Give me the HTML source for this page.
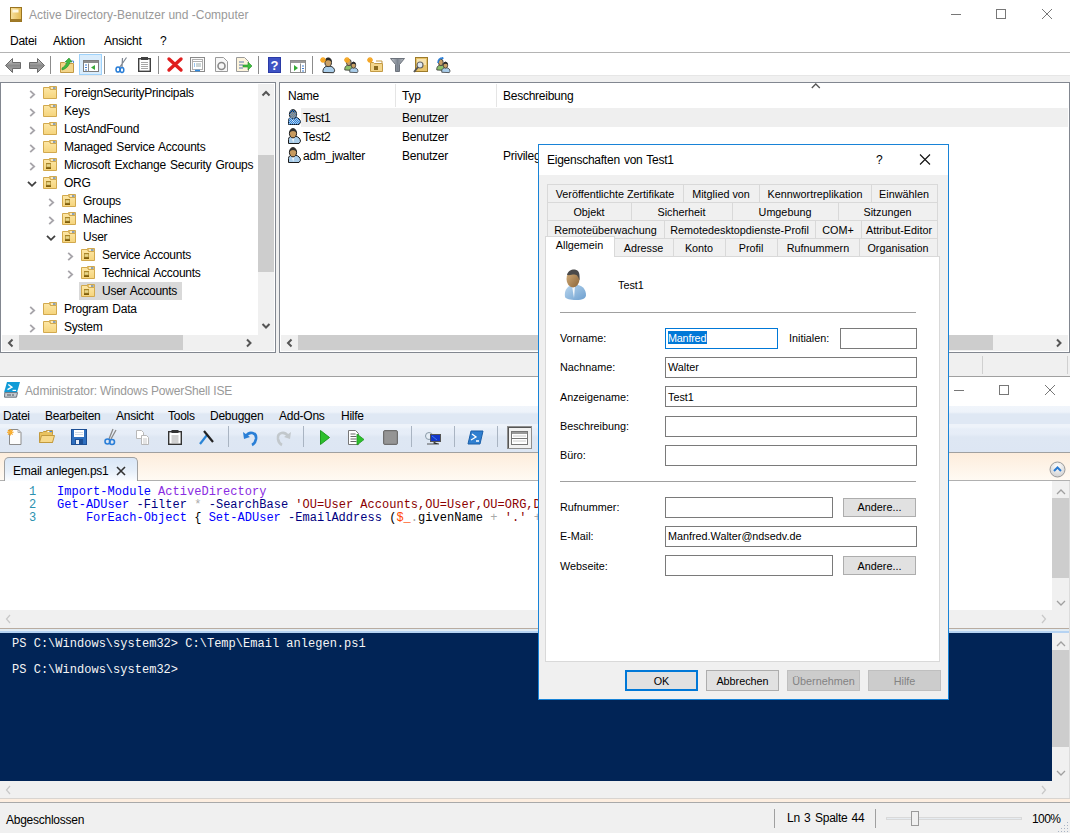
<!DOCTYPE html>
<html><head><meta charset="utf-8">
<style>
*{box-sizing:border-box}
html,body{margin:0;padding:0}
body{width:1070px;height:833px;position:relative;overflow:hidden;background:#fff;font-family:"Liberation Sans",sans-serif;font-size:12px;color:#000}
.a{position:absolute}
.t{position:absolute;white-space:nowrap;line-height:16px;font-size:12px;letter-spacing:-0.25px;word-spacing:1px}
.ti{letter-spacing:0;word-spacing:0}
.d{position:absolute;white-space:nowrap;line-height:14px;font-size:10.8px}
.m{position:absolute;white-space:pre;line-height:13px;font-family:"Liberation Mono",monospace;font-size:12px;letter-spacing:0.018px}
svg{position:absolute;overflow:visible}
</style></head><body>

<svg width="0" height="0" style="position:absolute;left:0;top:0">
<defs>
<linearGradient id="fold" x1="0" y1="0" x2="0" y2="1"><stop offset="0" stop-color="#fde7a6"/><stop offset="1" stop-color="#f5d47c"/></linearGradient>
<symbol id="folder" viewBox="0 0 14 13">
<path d="M0.5 1.5H6.5L7.5 3.5H13.5V12.5H0.5Z" fill="url(#fold)" stroke="#d2a94e" stroke-width="1"/>
<path d="M6.5 0.5H13.5V3.5H7.5Z" fill="#f3d07a" stroke="#d2a94e" stroke-width="1"/>
<path d="M8 2h2" stroke="#fff" stroke-width="1.2"/><path d="M10 2h2.5" stroke="#4a86e0" stroke-width="1.2"/>
</symbol>
<symbol id="ou" viewBox="0 0 14 13">
<path d="M0.5 1.5H6.5L7.5 3.5H13.5V12.5H0.5Z" fill="url(#fold)" stroke="#d2a94e" stroke-width="1"/>
<path d="M6.5 0.5H13.5V3.5H7.5Z" fill="#f3d07a" stroke="#d2a94e" stroke-width="1"/>
<path d="M8 2h2" stroke="#fff" stroke-width="1.2"/><path d="M10 2h2.5" stroke="#4a86e0" stroke-width="1.2"/>
<rect x="3" y="5" width="5" height="6" fill="#a88428"/><rect x="3.6" y="6.2" width="3.8" height="2.6" fill="#e8d68a"/><rect x="3" y="9.5" width="5" height="1.5" fill="#7d5c0c"/>
</symbol>
<symbol id="user" viewBox="0 0 13 16">
<path d="M0.5 15.5V11.5C0.5 9.3 2 8.3 4 8.3H7.5C10.3 8.5 12.5 10.8 12.5 13.3L11 15.5z" fill="#a9cdea" stroke="#1b1b1b" stroke-width="1"/>
<path d="M3.6 9l1.6 6l1.4-6z" fill="#f2f7fb"/>
<ellipse cx="5" cy="5.3" rx="3.6" ry="4.6" fill="#c79a5e" stroke="#1b1b1b" stroke-width="1"/>
<path d="M1.5 5C1.5 2 3 0.6 5 0.6S8.6 2 8.6 5C7.8 3.8 6.5 3 5 3S2.3 3.8 1.5 5z" fill="#303030"/>
</symbol>
<symbol id="userd" viewBox="0 0 13 16">
<path d="M0.5 15.5V11.5C0.5 9.3 2 8.3 4 8.3H7.5C10.3 8.5 12.5 10.8 12.5 13.3L11 15.5z" fill="url(#dith)"/>
<ellipse cx="5" cy="5.3" rx="3.6" ry="4.6" fill="url(#dith)"/>
</symbol>
<pattern id="dith" width="2" height="2" patternUnits="userSpaceOnUse"><rect width="1" height="1" fill="#2f7fd8"/><rect x="1" y="1" width="1" height="1" fill="#2f7fd8"/></pattern>
</defs></svg>

<div class="a" style="left:0px;top:0px;width:1070px;height:52px;background:#fff"></div>
<div class="t" style="left:29px;top:7px;color:#999;letter-spacing:0;word-spacing:0">Active Directory-Benutzer und -Computer</div>
<div class="t" style="left:10px;top:33px">Datei</div>
<div class="t" style="left:53px;top:33px">Aktion</div>
<div class="t" style="left:104px;top:33px">Ansicht</div>
<div class="t" style="left:160px;top:33px">?</div>
<div class="a" style="left:0px;top:52px;width:1070px;height:1px;background:#b4b4b4"></div>
<div class="a" style="left:0px;top:75px;width:1070px;height:1px;background:#e6e6e6"></div>
<div class="a" style="left:0px;top:76px;width:1070px;height:6px;background:#f0f0f0"></div>
<div class="a" style="left:0px;top:82px;width:276px;height:271px;border:1px solid #828790;background:#fff"></div>
<div class="a" style="left:276px;top:82px;width:3px;height:271px;background:#f0f0f0"></div>
<div class="a" style="left:279px;top:82px;width:791px;height:271px;border:1px solid #828790;background:#fff"></div>
<div class="a" style="left:0px;top:353px;width:1070px;height:23px;background:#f0f0f0"></div>
<div class="a" style="left:0px;top:376px;width:1070px;height:1px;background:#a0a0a0"></div>
<div class="a" style="left:1px;top:83px;width:256px;height:252px;overflow:hidden">
<svg style="left:28px;top:7px" width="7" height="9"><path d="M1.2 0.8l4 3.7l-4 3.7" fill="none" stroke="#a7a5aa" stroke-width="1.8"/></svg>
<svg style="left:42px;top:3px" width="14" height="13"><use href="#folder"/></svg>
<div class="t" style="left:63px;top:2px">ForeignSecurityPrincipals</div>
<svg style="left:28px;top:25px" width="7" height="9"><path d="M1.2 0.8l4 3.7l-4 3.7" fill="none" stroke="#a7a5aa" stroke-width="1.8"/></svg>
<svg style="left:42px;top:21px" width="14" height="13"><use href="#folder"/></svg>
<div class="t" style="left:63px;top:20px">Keys</div>
<svg style="left:28px;top:43px" width="7" height="9"><path d="M1.2 0.8l4 3.7l-4 3.7" fill="none" stroke="#a7a5aa" stroke-width="1.8"/></svg>
<svg style="left:42px;top:39px" width="14" height="13"><use href="#folder"/></svg>
<div class="t" style="left:63px;top:38px">LostAndFound</div>
<svg style="left:28px;top:61px" width="7" height="9"><path d="M1.2 0.8l4 3.7l-4 3.7" fill="none" stroke="#a7a5aa" stroke-width="1.8"/></svg>
<svg style="left:42px;top:57px" width="14" height="13"><use href="#folder"/></svg>
<div class="t" style="left:63px;top:56px">Managed Service Accounts</div>
<svg style="left:28px;top:79px" width="7" height="9"><path d="M1.2 0.8l4 3.7l-4 3.7" fill="none" stroke="#a7a5aa" stroke-width="1.8"/></svg>
<svg style="left:42px;top:75px" width="14" height="13"><use href="#ou"/></svg>
<div class="t" style="left:63px;top:74px">Microsoft Exchange Security Groups</div>
<svg style="left:26px;top:98px" width="10" height="6"><path d="M1 0.8l4 4l4-4" fill="none" stroke="#404040" stroke-width="1.8"/></svg>
<svg style="left:42px;top:93px" width="14" height="13"><use href="#ou"/></svg>
<div class="t" style="left:63px;top:92px">ORG</div>
<svg style="left:47px;top:115px" width="7" height="9"><path d="M1.2 0.8l4 3.7l-4 3.7" fill="none" stroke="#a7a5aa" stroke-width="1.8"/></svg>
<svg style="left:61px;top:111px" width="14" height="13"><use href="#ou"/></svg>
<div class="t" style="left:82px;top:110px">Groups</div>
<svg style="left:47px;top:133px" width="7" height="9"><path d="M1.2 0.8l4 3.7l-4 3.7" fill="none" stroke="#a7a5aa" stroke-width="1.8"/></svg>
<svg style="left:61px;top:129px" width="14" height="13"><use href="#ou"/></svg>
<div class="t" style="left:82px;top:128px">Machines</div>
<svg style="left:45px;top:152px" width="10" height="6"><path d="M1 0.8l4 4l4-4" fill="none" stroke="#404040" stroke-width="1.8"/></svg>
<svg style="left:61px;top:147px" width="14" height="13"><use href="#ou"/></svg>
<div class="t" style="left:82px;top:146px">User</div>
<svg style="left:66px;top:169px" width="7" height="9"><path d="M1.2 0.8l4 3.7l-4 3.7" fill="none" stroke="#a7a5aa" stroke-width="1.8"/></svg>
<svg style="left:80px;top:165px" width="14" height="13"><use href="#ou"/></svg>
<div class="t" style="left:101px;top:164px">Service Accounts</div>
<svg style="left:66px;top:187px" width="7" height="9"><path d="M1.2 0.8l4 3.7l-4 3.7" fill="none" stroke="#a7a5aa" stroke-width="1.8"/></svg>
<svg style="left:80px;top:183px" width="14" height="13"><use href="#ou"/></svg>
<div class="t" style="left:101px;top:182px">Technical Accounts</div>
<div class="a" style="left:78px;top:199px;width:0;height:0"></div>
<div class="a" style="left:78px;top:199px;width:103px;height:18px;background:#d9d9d9"></div>
<svg style="left:80px;top:201px" width="14" height="13"><use href="#ou"/></svg>
<div class="t" style="left:101px;top:200px">User Accounts</div>
<svg style="left:28px;top:223px" width="7" height="9"><path d="M1.2 0.8l4 3.7l-4 3.7" fill="none" stroke="#a7a5aa" stroke-width="1.8"/></svg>
<svg style="left:42px;top:219px" width="14" height="13"><use href="#folder"/></svg>
<div class="t" style="left:63px;top:218px">Program Data</div>
<svg style="left:28px;top:241px" width="7" height="9"><path d="M1.2 0.8l4 3.7l-4 3.7" fill="none" stroke="#a7a5aa" stroke-width="1.8"/></svg>
<svg style="left:42px;top:237px" width="14" height="13"><use href="#folder"/></svg>
<div class="t" style="left:63px;top:236px">System</div>
</div>
<div class="a" style="left:258px;top:84px;width:16px;height:251px;background:#f0f0f0"></div>
<div class="a" style="left:258px;top:155px;width:16px;height:117px;background:#cdcdcd"></div>
<svg style="left:258px;top:84px" width="16" height="251"><path d="M4.5 11.5l3.5-3.5l3.5 3.5" fill="none" stroke="#555" stroke-width="2"/><path d="M4.5 240l3.5 3.5l3.5-3.5" fill="none" stroke="#555" stroke-width="2"/></svg>
<div class="a" style="left:2px;top:335px;width:256px;height:16px;background:#f0f0f0"></div>
<div class="a" style="left:19px;top:335px;width:164px;height:15px;background:#cdcdcd"></div>
<svg style="left:2px;top:335px" width="256" height="16"><path d="M10.5 4.5l-3.5 3.5l3.5 3.5" fill="none" stroke="#555" stroke-width="2"/><path d="M245 4.5l3.5 3.5l-3.5 3.5" fill="none" stroke="#555" stroke-width="2"/></svg>
<div class="a" style="left:258px;top:335px;width:16px;height:16px;background:#f0f0f0"></div>
<div class="t" style="left:288px;top:88px">Name</div>
<div class="t" style="left:402px;top:88px">Typ</div>
<div class="t" style="left:503px;top:88px">Beschreibung</div>
<div class="a" style="left:395px;top:84px;width:1px;height:23px;background:#e5e5e5"></div>
<div class="a" style="left:496px;top:84px;width:1px;height:23px;background:#e5e5e5"></div>
<svg style="left:811px;top:83px" width="10" height="7"><path d="M0.8 5l4-4l4 4" fill="none" stroke="#555" stroke-width="1.3"/></svg>
<div class="a" style="left:301px;top:108px;width:767px;height:19px;background:#efefef"></div>
<svg style="left:288px;top:109px" width="13" height="16"><use href="#user"/><use href="#userd"/></svg>
<div class="t" style="left:303px;top:110px">Test1</div>
<div class="t" style="left:402px;top:110px">Benutzer</div>
<svg style="left:288px;top:128px" width="13" height="16"><use href="#user"/></svg>
<div class="t" style="left:303px;top:129px">Test2</div>
<div class="t" style="left:402px;top:129px">Benutzer</div>
<svg style="left:288px;top:147px" width="13" height="16"><use href="#user"/></svg>
<div class="t" style="left:303px;top:148px">adm_jwalter</div>
<div class="t" style="left:402px;top:148px">Benutzer</div>
<div class="t" style="left:503px;top:148px">Privileg</div>
<div class="a" style="left:281px;top:335px;width:787px;height:16px;background:#f0f0f0"></div>
<div class="a" style="left:298px;top:335px;width:695px;height:15px;background:#cdcdcd"></div>
<svg style="left:281px;top:335px" width="787" height="16"><path d="M10.5 4.5l-3.5 3.5l3.5 3.5" fill="none" stroke="#555" stroke-width="2"/><path d="M776 4.5l3.5 3.5l-3.5 3.5" fill="none" stroke="#555" stroke-width="2"/></svg>
<div class="a" style="left:982px;top:356px;width:1px;height:18px;background:#d0d0d0"></div>
<div class="a" style="left:1067px;top:356px;width:1px;height:18px;background:#d0d0d0"></div>
<svg style="left:940px;top:0" width="130" height="30"><path d="M11 14.5h10" stroke="#777" stroke-width="1"/><rect x="56.5" y="9.5" width="9" height="9" fill="none" stroke="#777" stroke-width="1"/><path d="M102 9l10 10M112 9l-10 10" stroke="#777" stroke-width="1"/></svg>
<div class="a" style="left:50px;top:56px;width:1px;height:18px;background:#8c8c8c"></div>
<div class="a" style="left:104px;top:56px;width:1px;height:18px;background:#8c8c8c"></div>
<div class="a" style="left:158px;top:56px;width:1px;height:18px;background:#8c8c8c"></div>
<div class="a" style="left:258px;top:56px;width:1px;height:18px;background:#8c8c8c"></div>
<div class="a" style="left:312px;top:56px;width:1px;height:18px;background:#8c8c8c"></div>
<svg style="left:5px;top:58px" width="17" height="15"><defs><linearGradient id="ag" x1="0" y1="0" x2="0" y2="1"><stop offset="0" stop-color="#d8d8d8"/><stop offset="0.5" stop-color="#8a8a8a"/><stop offset="1" stop-color="#b0b0b0"/></linearGradient></defs><path d="M0.5 7.5l7-7v4h8v6h-8v4z" fill="url(#ag)" stroke="#6b6b6b" stroke-width="1"/></svg>
<svg style="left:28px;top:58px" width="17" height="15"><path d="M16.5 7.5l-7-7v4h-8v6h8v4z" fill="url(#ag)" stroke="#6b6b6b" stroke-width="1"/></svg>
<svg style="left:60px;top:58px" width="15" height="15"><path d="M0.5 4.5h4l1 1h8v9h-13z" fill="#f3d58a" stroke="#c39a44"/><path d="M9 3h4.5v2" fill="none" stroke="#5a8fd8"/><path d="M2 10c2-1 4-3 5-6l-2 0l4-4l3 4h-2c-1 4-4 7-8 8z" fill="#3fb83f" stroke="#2a8a2a" stroke-width="0.6"/></svg>
<div class="a" style="left:79px;top:54px;width:23px;height:21px;background:#d9ecfc;border:1px solid #9ed2fb"></div>
<svg style="left:83px;top:60px" width="16" height="12"><rect x="0.5" y="0.5" width="15" height="11" fill="#fff" stroke="#7d7d7d"/><rect x="1" y="1" width="14" height="2" fill="#8d8d8d"/><path d="M5.5 3.5v8" stroke="#8d8d8d"/><path d="M2 5h2M2 7.5h2M2 10h2" stroke="#3d7ed6" stroke-width="1"/><path d="M12 5v5l-4-2.5z" fill="#3aa83a"/></svg>
<svg style="left:115px;top:57px" width="13" height="16"><path d="M11.5 0.5l-7 10M7.5 1l-0.5 9" stroke="#7d8590" stroke-width="1.2"/><ellipse cx="3" cy="12.5" rx="2" ry="2.6" fill="none" stroke="#2b7fd8" stroke-width="1.5"/><ellipse cx="7" cy="13" rx="1.8" ry="2.4" fill="none" stroke="#2b7fd8" stroke-width="1.5"/></svg>
<svg style="left:138px;top:57px" width="13" height="15"><rect x="0.7" y="1.7" width="11.6" height="12.6" fill="#fff" stroke="#404040" stroke-width="1.4"/><rect x="3" y="0" width="7" height="3" fill="#404040"/><path d="M3 5.5h7M3 7.5h7M3 9.5h7M3 11.5h7" stroke="#909090" stroke-width="0.8"/></svg>
<svg style="left:167px;top:57px" width="16" height="15"><path d="M2 2l12 11M14 2l-12 11" stroke="#e01f1f" stroke-width="3.4" stroke-linecap="round"/></svg>
<svg style="left:190px;top:57px" width="15" height="15"><rect x="0.5" y="0.5" width="14" height="14" fill="#fafafa" stroke="#8a8a8a"/><rect x="2.5" y="2.5" width="10" height="10" fill="#fff" stroke="#b0b0b0"/><path d="M2.5 4.5h10" stroke="#b0b0b0"/><path d="M4 7h1M4 9h1" stroke="#2f8ae0"/><path d="M6 7h5M6 9h5" stroke="#9aa"/><path d="M5 13.5h5" stroke="#2f8ae0" stroke-width="1.6"/></svg>
<svg style="left:215px;top:57px" width="13" height="15"><path d="M0.5 0.5h8l4 4v10h-12z" fill="#f7f7f7" stroke="#9a9a9a"/><circle cx="6.5" cy="9" r="3.5" fill="none" stroke="#8a8a8a" stroke-width="1.6"/></svg>
<svg style="left:236px;top:57px" width="16" height="15"><path d="M0.5 0.5h8l4 4v10h-12z" fill="#fdf4dc" stroke="#9a9a9a"/><path d="M3 5h5M3 8h4M3 11h4" stroke="#5a7bb0"/><path d="M7 8h5v-3l4 4l-4 4v-3h-5z" fill="#3cbf3c" stroke="#2a8a2a" stroke-width="0.6"/></svg>
<svg style="left:268px;top:57px" width="13" height="16"><rect x="0" y="0" width="13" height="16" fill="#2a3aa6"/><rect x="1" y="1" width="11" height="14" fill="#3d52c4"/><text x="6.5" y="13" font-family="Liberation Sans" font-weight="bold" font-size="13" fill="#fff" text-anchor="middle">?</text></svg>
<svg style="left:290px;top:60px" width="16" height="13"><rect x="0.5" y="0.5" width="15" height="12" fill="#fff" stroke="#8d8d8d"/><rect x="1" y="1" width="14" height="2" fill="#9a9a9a"/><path d="M10.5 3.5v9" stroke="#8d8d8d"/><path d="M12 6h2M12 8.5h2M12 11h2" stroke="#3d7ed6"/><path d="M4 5v6l4-3z" fill="#33aa33"/></svg>
<svg style="left:320px;top:57px" width="16" height="16"><g transform="translate(2,0)"><path d="M1 15.5c-0.5-3 1-5.8 3.8-6.3h3.2c3 0.4 4.6 2.4 4.6 4.6l-1 1.9z" fill="#a9cdea" stroke="#333" stroke-width="1"/><ellipse cx="6.2" cy="5.3" rx="3.3" ry="4.3" fill="#c9a066" stroke="#333"/><path d="M2.9 5c0-3 1.5-4.3 3.3-4.3s3.3 1.3 3.3 4.3c-1-1.2-2-1.7-3.3-1.7s-2.3 0.5-3.3 1.7z" fill="#2a2a2a"/></g><path d="M3 0v6M0 3h6M1 1l4 4M5 1l-4 4" stroke="#f5a623" stroke-width="1.3"/></svg>
<svg style="left:344px;top:57px" width="16" height="16"><g transform="translate(0,1) scale(0.8)"><path d="M1 15c-0.5-3 1-5.5 3.5-6h3c3 0.4 4.5 2.4 4.5 4.6l-1 1.9z" fill="#8cc06a" stroke="#333" stroke-width="1"/><ellipse cx="6" cy="5.5" rx="3" ry="4" fill="#c9a066" stroke="#333"/></g><g transform="translate(5,4) scale(0.75)"><path d="M1 15c-0.5-3 1-5.5 3.5-6h3c3 0.4 4.5 2.4 4.5 4.6l-1 1.9z" fill="#a9cdea" stroke="#333" stroke-width="1"/><ellipse cx="6" cy="5.5" rx="3" ry="4" fill="#c9a066" stroke="#333"/><path d="M3 5c0-3 1.5-4 3-4s3 1 3 4c-1-1-2-1.5-3-1.5s-2 0.5-3 1.5z" fill="#2a2a2a"/></g><path d="M3 0v6M0 3h6M1 1l4 4M5 1l-4 4" stroke="#f5a623" stroke-width="1.3"/></svg>
<svg style="left:367px;top:57px" width="16" height="15"><path d="M3.5 5.5h3l1 1h8v8h-12z" fill="#f3d58a" stroke="#c39a44"/><path d="M9 4h6v2" fill="none" stroke="#c39a44"/><rect x="7" y="9" width="4" height="4" fill="#8a6a1e"/><path d="M3 0v6M0 3h6M1 1l4 4M5 1l-4 4" stroke="#f5a623" stroke-width="1.3"/></svg>
<svg style="left:390px;top:57px" width="15" height="15"><defs><linearGradient id="fg" x1="0" x2="1"><stop offset="0" stop-color="#c8ccd2"/><stop offset="0.5" stop-color="#7d8590"/><stop offset="1" stop-color="#b8bcc2"/></linearGradient></defs><path d="M0.5 1.5h14l-5 6v7h-4v-7z" fill="url(#fg)" stroke="#6d737c"/></svg>
<svg style="left:413px;top:57px" width="15" height="16"><rect x="2.5" y="0.5" width="12" height="14" fill="#e8c36a" stroke="#9d7b2a"/><rect x="4" y="2" width="9" height="6" fill="#f6e3b0"/><circle cx="7" cy="8" r="3" fill="#dfe9f3" stroke="#666" stroke-width="1.2"/><path d="M5 10l-4 5" stroke="#555" stroke-width="2"/></svg>
<svg style="left:436px;top:57px" width="16" height="16"><g transform="translate(0,1) scale(0.8)"><path d="M1 15c-0.5-3 1-5.5 3.5-6h3c3 0.4 4.5 2.4 4.5 4.6l-1 1.9z" fill="#8cc06a" stroke="#333" stroke-width="1"/><ellipse cx="6" cy="5.5" rx="3" ry="4" fill="#c9a066" stroke="#333"/></g><g transform="translate(5,4) scale(0.75)"><path d="M1 15c-0.5-3 1-5.5 3.5-6h3c3 0.4 4.5 2.4 4.5 4.6l-1 1.9z" fill="#a9cdea" stroke="#333" stroke-width="1"/><ellipse cx="6" cy="5.5" rx="3" ry="4" fill="#c9a066" stroke="#333"/><path d="M3 5c0-3 1.5-4 3-4s3 1 3 4c-1-1-2-1.5-3-1.5s-2 0.5-3 1.5z" fill="#2a2a2a"/></g><path d="M2 6c0-3 2-5 5-5" fill="none" stroke="#2b7fd8" stroke-width="1.5"/><path d="M6 0l2 1l-2 2" fill="#2b7fd8"/></svg>
<div class="a" style="left:0px;top:377px;width:1070px;height:29px;background:#fff"></div>
<div class="t" style="left:25px;top:383px;color:#999;letter-spacing:-0.15px;word-spacing:0">Administrator: Windows PowerShell ISE</div>
<svg style="left:940px;top:377px" width="130" height="29"><path d="M14 13.5h10" stroke="#777" stroke-width="1"/><rect x="59.5" y="8.5" width="9" height="9" fill="none" stroke="#777" stroke-width="1"/><path d="M105 8l10 10M115 8l-10 10" stroke="#777" stroke-width="1"/></svg>
<div class="a" style="left:0px;top:406px;width:1070px;height:18px;background:linear-gradient(#f1f5fb 0,#eef3fa 6px,#dfe8f4 8px,#dfe8f4 18px)"></div>
<div class="a" style="left:0px;top:424px;width:1070px;height:28px;background:linear-gradient(#eef3fa 0,#eef3fa 3px,#e7eef8 5px,#e6edf7 10px,#dee7f3 13px,#dde6f3 28px)"></div>
<div class="t" style="left:3px;top:408px">Datei</div>
<div class="t" style="left:45px;top:408px">Bearbeiten</div>
<div class="t" style="left:116px;top:408px">Ansicht</div>
<div class="t" style="left:168px;top:408px">Tools</div>
<div class="t" style="left:210px;top:408px">Debuggen</div>
<div class="t" style="left:279px;top:408px">Add-Ons</div>
<div class="t" style="left:341px;top:408px">Hilfe</div>
<div class="a" style="left:228px;top:426px;width:1px;height:21px;background:#a9b4c2"></div>
<div class="a" style="left:303px;top:426px;width:1px;height:21px;background:#a9b4c2"></div>
<div class="a" style="left:411px;top:426px;width:1px;height:21px;background:#a9b4c2"></div>
<div class="a" style="left:454px;top:426px;width:1px;height:21px;background:#a9b4c2"></div>
<div class="a" style="left:497px;top:426px;width:1px;height:21px;background:#a9b4c2"></div>
<svg style="left:7px;top:429px" width="16" height="16"><path d="M2.5 0.5h8.5l3 3v12h-11.5z" fill="#fdfdfd" stroke="#8c8c8c"/><path d="M11 0.5v3h3" fill="none" stroke="#b0b0b0"/><g stroke="#f7a21b" stroke-width="1.1"><path d="M3.3 0v6.6M0 3.3h6.6M1 1l4.6 4.6M5.6 1l-4.6 4.6"/></g><circle cx="3.3" cy="3.3" r="1.6" fill="#f9b233"/></svg>
<svg style="left:39px;top:430px" width="16" height="14"><path d="M0.5 12.5V2.5H3.5L4.5 1.5H7.5V0.5H13.5V4.5H13.5V12.5z" fill="#e9c25e" stroke="#c29a3e"/><path d="M8.5 1.5h2" stroke="#fff" stroke-width="1.2"/><path d="M10.5 1.5h2.5" stroke="#4a86e0" stroke-width="1.2"/><path d="M0.5 12.5L2.5 5.5H15.5L13.5 12.5z" fill="#f7d98b" stroke="#c29a3e"/></svg>
<svg style="left:71px;top:429px" width="16" height="16"><rect x="0.5" y="0.5" width="15" height="15" fill="#2e6fbf" stroke="#1d4f94"/><rect x="3" y="1" width="10" height="7" fill="#fff"/><path d="M4 3.5h8M4 5.5h8" stroke="#c6d2e0" stroke-width="0.8"/><rect x="4" y="10" width="8" height="6" fill="#1d4f94"/><rect x="5" y="11" width="3" height="4" fill="#e8eef8"/></svg>
<svg style="left:104px;top:429px" width="12" height="16"><path d="M9 0l-4 10M12 1l-5 9" stroke="#8a8a8a" stroke-width="1.3"/><circle cx="3.5" cy="12.5" r="2.5" fill="none" stroke="#2b7fd8" stroke-width="1.6"/><circle cx="8" cy="13" r="2.5" fill="none" stroke="#2b7fd8" stroke-width="1.6"/></svg>
<svg style="left:136px;top:430px" width="13" height="15"><path d="M0.5 0.5h5l2 2v6h-7z" fill="#fff" stroke="#b8b8b8"/><path d="M5.5 5.5h5l2 2v7h-7z" fill="#fff" stroke="#b8b8b8"/><path d="M7 9h4M7 11h4M7 13h4" stroke="#c8c8c8"/></svg>
<svg style="left:168px;top:430px" width="14" height="15"><rect x="0.7" y="1.7" width="12.6" height="12.6" fill="#fff" stroke="#333" stroke-width="1.4"/><rect x="3.5" y="0" width="7" height="3" fill="#333"/><path d="M3.5 6h7M3.5 8h7M3.5 10h7M3.5 12h7" stroke="#8a8a8a" stroke-width="0.8"/></svg>
<svg style="left:198px;top:430px" width="16" height="15"><path d="M2 14l7-9" stroke="#2a85d6" stroke-width="2.2"/><path d="M6 1l9 11" stroke="#222" stroke-width="2.2"/></svg>
<svg style="left:243px;top:430px" width="16" height="15"><path d="M3 6c3-5 11-4 10 3c-0.5 3-2 5-4 6" fill="none" stroke="#2a7fd6" stroke-width="2.6"/><path d="M0 2l1 7l6-2z" fill="#2a7fd6"/></svg>
<svg style="left:275px;top:430px" width="16" height="15"><path d="M13 6c-3-5-11-4-10 3c0.5 3 2 5 4 6" fill="none" stroke="#c2c8cc" stroke-width="2.6"/><path d="M16 2l-1 7l-6-2z" fill="#c2c8cc"/></svg>
<svg style="left:320px;top:430px" width="10" height="15"><path d="M0.5 0.5l9 7l-9 7z" fill="#2cc02c" stroke="#1f9a1f"/></svg>
<svg style="left:348px;top:430px" width="17" height="15"><path d="M0.5 0.5h7l3 3v11h-10z" fill="#fff" stroke="#777"/><path d="M2.5 4h5M2.5 6.5h6M2.5 9h6M2.5 11.5h6" stroke="#666"/><path d="M9 4l7 5.5l-7 5.5z" fill="#2cc02c" stroke="#1f9a1f" stroke-width="0.8"/></svg>
<svg style="left:383px;top:430px" width="15" height="15"><rect x="0.5" y="0.5" width="14" height="14" rx="1.5" fill="#8c8c8c" stroke="#6e6e6e"/><rect x="2" y="2" width="11" height="11" fill="#959595"/></svg>
<svg style="left:425px;top:431px" width="16" height="14"><circle cx="4" cy="5" r="3.5" fill="#e6eef6" stroke="#8a9aa8"/><rect x="5.5" y="3.5" width="10" height="7" fill="#1436c8" stroke="#555"/><path d="M7 5l5 4" stroke="#3d7ef0"/><path d="M9 11v2h5M2 13h7" stroke="#555"/></svg>
<svg style="left:468px;top:430px" width="15" height="15"><path d="M3 1h12l-3 13h-12z" fill="#2f7fd0" stroke="#1b5fa8"/><path d="M4 4l4 3l-5 3M8 11h3" fill="none" stroke="#fff" stroke-width="1.3"/></svg>
<div class="a" style="left:507px;top:426px;width:25px;height:23px;border:1px solid #8e8e8e;background:#f1f1f1;box-shadow:inset 1px 1px 0 #555"></div>
<svg style="left:511px;top:431px" width="17" height="14"><rect x="0.5" y="0.5" width="16" height="13" fill="#fff" stroke="#777"/><rect x="1" y="1" width="15" height="2" fill="#999"/><path d="M1 7.5h15" stroke="#777"/><path d="M2 5h13M2 10h13" stroke="#ccc"/></svg>
<svg style="left:4px;top:382px" width="17" height="16"><path d="M3 0h13l-3 10.5h-13z" fill="#109bd7"/><path d="M4.3 2.5l3.6 2.6l-4.4 2.6" fill="none" stroke="#fff" stroke-width="1.4"/><path d="M8.5 8.4h3.6" stroke="#fff" stroke-width="1.2"/><path d="M0.8 10.6h12.7l-1 4.6h-12z" fill="#c6ccd2" stroke="#6b7680" stroke-width="1"/><path d="M3 13h4M8 13h2" stroke="#4a5560" stroke-width="1.2"/></svg>
<svg style="left:10px;top:7px" width="12" height="15"><defs><linearGradient id="adg" x1="0" x2="1"><stop offset="0" stop-color="#f7e1a0"/><stop offset="1" stop-color="#e2b84f"/></linearGradient></defs><rect x="0.5" y="0.5" width="11" height="14" fill="url(#adg)" stroke="#9a7420"/><rect x="2.5" y="2.5" width="6" height="3" fill="#fff8e0"/><rect x="1" y="12" width="10" height="2.5" fill="#a07a28"/></svg>
<div class="a" style="left:0px;top:452px;width:1070px;height:1px;background:#a0a0a0"></div>
<div class="a" style="left:0px;top:453px;width:1070px;height:27px;background:linear-gradient(#fdeddc,#fffaf3)"></div>
<div class="a" style="left:0px;top:480px;width:1070px;height:1px;background:#b0b0b0"></div>
<div class="a" style="left:4px;top:457px;width:134px;height:24px;border:1px solid #a0a0a0;border-bottom:none;border-radius:5px 5px 0 0;background:linear-gradient(#dae7f7,#e6eff9 55%,#fbfdff)"></div>
<div class="t" style="left:13px;top:463px">Email anlegen.ps1</div>
<svg style="left:116px;top:466px" width="10" height="10"><path d="M1 1l8 8M9 1l-8 8" stroke="#333" stroke-width="1.6"/></svg>
<svg style="left:1049px;top:461px" width="17" height="17"><defs><radialGradient id="cb" cx="0.5" cy="0.3" r="0.7"><stop offset="0" stop-color="#fff"/><stop offset="1" stop-color="#d0d0d0"/></radialGradient></defs><circle cx="8.5" cy="8.5" r="7.5" fill="url(#cb)" stroke="#9a9a9a"/><path d="M5 10l3.5-3.5l3.5 3.5" fill="none" stroke="#2a7ad0" stroke-width="2"/></svg>
<div class="a" style="left:0px;top:481px;width:1070px;height:129px;background:#fff"></div>
<div class="a" style="left:1052px;top:481px;width:18px;height:129px;background:#f0f0f0"></div>
<div class="a" style="left:1052px;top:498px;width:17px;height:80px;background:#cdcdcd"></div>
<svg style="left:1052px;top:481px" width="18" height="129"><path d="M5 13l4-4l4 4" fill="none" stroke="#a0a0a0" stroke-width="1.3"/><path d="M5 120l4 4l4-4" fill="none" stroke="#a0a0a0" stroke-width="1.3"/></svg>
<div class="m" style="left:29px;top:486px;color:#2b91af">1</div>
<div class="m" style="left:29px;top:499px;color:#2b91af">2</div>
<div class="m" style="left:29px;top:512px;color:#2b91af">3</div>
<div class="m" style="left:57px;top:486px"><span style="color:#0000ff">Import-Module</span><span style="color:#000"> </span><span style="color:#8a2be2">ActiveDirectory</span></div>
<div class="m" style="left:57px;top:499px"><span style="color:#0000ff">Get-ADUser</span><span style="color:#000"> </span><span style="color:#000080">-Filter</span><span style="color:#000"> </span><span style="color:#a9a9a9">*</span><span style="color:#000"> </span><span style="color:#000080">-SearchBase</span><span style="color:#000"> </span><span style="color:#8b0000">'OU=User Accounts,OU=User,OU=ORG,DC=ndsedv,DC=de'</span></div>
<div class="m" style="left:57px;top:512px"><span style="color:#000">    </span><span style="color:#0000ff">ForEach-Object</span><span style="color:#000"> { </span><span style="color:#0000ff">Set-ADUser</span><span style="color:#000"> </span><span style="color:#000080">-EmailAddress</span><span style="color:#000"> (</span><span style="color:#ff4500">$_</span><span style="color:#a9a9a9">.</span><span style="color:#000">givenName</span><span style="color:#000"> </span><span style="color:#a9a9a9">+</span><span style="color:#000"> </span><span style="color:#8b0000">'.'</span><span style="color:#000"> </span><span style="color:#a9a9a9">+</span><span style="color:#000"> </span><span style="color:#ff4500">$_</span><span style="color:#000">.surname</span></div>
<div class="a" style="left:0px;top:610px;width:1070px;height:18px;background:#f0f0f0"></div>
<svg style="left:0;top:610px" width="20" height="18"><path d="M10 5l-3.5 4l3.5 4" fill="none" stroke="#c8c8c8" stroke-width="1.2"/></svg>
<div class="a" style="left:0px;top:628px;width:1070px;height:1px;background:#b9aca0"></div>
<div class="a" style="left:0px;top:629px;width:1070px;height:4px;background:linear-gradient(#e0ebf3 0,#e0ebf3 50%,#b6d3f2 50%,#b6d3f2 100%)"></div>
<div class="a" style="left:0px;top:633px;width:1070px;height:148px;background:#012456"></div>
<div class="m" style="left:12px;top:631px;color:#f5f5f5;line-height:26px">PS C:\Windows\system32&gt; C:\Temp\Email anlegen.ps1
PS C:\Windows\system32&gt;</div>
<div class="a" style="left:1052px;top:633px;width:18px;height:148px;background:#f0f0f0"></div>
<div class="a" style="left:1052px;top:650px;width:17px;height:97px;background:#cdcdcd"></div>
<svg style="left:1052px;top:633px" width="18" height="148"><path d="M5 13l4-4l4 4" fill="none" stroke="#a0a0a0" stroke-width="1.3"/><path d="M5 138l4 4l4-4" fill="none" stroke="#a0a0a0" stroke-width="1.3"/></svg>
<div class="a" style="left:0px;top:781px;width:1070px;height:18px;background:#f0f0f0"></div>
<svg style="left:0;top:781px" width="20" height="18"><path d="M10 5l-3.5 4l3.5 4" fill="none" stroke="#c8c8c8" stroke-width="1.2"/></svg>
<svg style="left:1036px;top:781px" width="18" height="18"><path d="M6 5l3.5 4l-3.5 4" fill="none" stroke="#c8c8c8" stroke-width="1.2"/></svg>
<svg style="left:1036px;top:610px" width="18" height="18"><path d="M6 5l3.5 4l-3.5 4" fill="none" stroke="#c8c8c8" stroke-width="1.2"/></svg>
<div class="a" style="left:1069px;top:481px;width:1px;height:321px;background:#dcdcdc"></div>
<div class="a" style="left:0px;top:798px;width:1070px;height:1px;background:#d8d4d0"></div>
<div class="a" style="left:0px;top:799px;width:1070px;height:3px;background:#fdeee0"></div>
<div class="a" style="left:0px;top:802px;width:1070px;height:1px;background:#a9a9a9"></div>
<div class="a" style="left:0px;top:803px;width:1070px;height:30px;background:#f0f0f0"></div>
<div class="t" style="left:6px;top:812px">Abgeschlossen</div>
<div class="a" style="left:774px;top:809px;width:1px;height:19px;background:#a0a0a0"></div>
<div class="a" style="left:875px;top:809px;width:1px;height:19px;background:#a0a0a0"></div>
<div class="t" style="left:787px;top:810px">Ln 3</div>
<div class="t" style="left:815px;top:810px">Spalte 44</div>
<div class="a" style="left:886px;top:817px;width:136px;height:3px;background:#e6ebf0;border:1px solid #d9d9d9"></div>
<div class="a" style="left:911px;top:811px;width:8px;height:15px;background:#f0f0f0;border:1px solid #9a9a9a"></div>
<div class="t" style="left:1032px;top:811px;letter-spacing:-0.6px">100%</div>
<div class="a" style="left:538px;top:144px;width:411px;height:556px;border:1px solid #1883d7;background:#f0f0f0"></div>
<div class="a" style="left:539px;top:145px;width:409px;height:30px;background:#fff"></div>
<div class="t" style="left:547px;top:152px">Eigenschaften von Test1</div>
<svg style="left:870px;top:150px" width="70" height="20"><path d="M50 4.5l10 10M60 4.5l-10 10" stroke="#111" stroke-width="1.1"/></svg>
<div class="t" style="left:876px;top:152px">?</div>
<div class="a" style="left:547px;top:184px;width:137px;height:19px;border:1px solid #d9d9d9;background:#f0f0f0"></div>
<div class="d" style="left:547px;top:187px;width:136px;text-align:center">Veröffentlichte Zertifikate</div>
<div class="a" style="left:683px;top:184px;width:77px;height:19px;border:1px solid #d9d9d9;background:#f0f0f0"></div>
<div class="d" style="left:683px;top:187px;width:76px;text-align:center">Mitglied von</div>
<div class="a" style="left:759px;top:184px;width:113px;height:19px;border:1px solid #d9d9d9;background:#f0f0f0"></div>
<div class="d" style="left:759px;top:187px;width:112px;text-align:center">Kennwortreplikation</div>
<div class="a" style="left:871px;top:184px;width:67px;height:19px;border:1px solid #d9d9d9;background:#f0f0f0"></div>
<div class="d" style="left:871px;top:187px;width:66px;text-align:center">Einwählen</div>
<div class="a" style="left:547px;top:202px;width:85px;height:19px;border:1px solid #d9d9d9;background:#f0f0f0"></div>
<div class="d" style="left:547px;top:205px;width:84px;text-align:center">Objekt</div>
<div class="a" style="left:631px;top:202px;width:102px;height:19px;border:1px solid #d9d9d9;background:#f0f0f0"></div>
<div class="d" style="left:631px;top:205px;width:101px;text-align:center">Sicherheit</div>
<div class="a" style="left:732px;top:202px;width:107px;height:19px;border:1px solid #d9d9d9;background:#f0f0f0"></div>
<div class="d" style="left:732px;top:205px;width:106px;text-align:center">Umgebung</div>
<div class="a" style="left:838px;top:202px;width:100px;height:19px;border:1px solid #d9d9d9;background:#f0f0f0"></div>
<div class="d" style="left:838px;top:205px;width:99px;text-align:center">Sitzungen</div>
<div class="a" style="left:547px;top:220px;width:118px;height:19px;border:1px solid #d9d9d9;background:#f0f0f0"></div>
<div class="d" style="left:547px;top:223px;width:117px;text-align:center">Remoteüberwachung</div>
<div class="a" style="left:664px;top:220px;width:152px;height:19px;border:1px solid #d9d9d9;background:#f0f0f0"></div>
<div class="d" style="left:664px;top:223px;width:151px;text-align:center">Remotedesktopdienste-Profil</div>
<div class="a" style="left:815px;top:220px;width:47px;height:19px;border:1px solid #d9d9d9;background:#f0f0f0"></div>
<div class="d" style="left:815px;top:223px;width:46px;text-align:center">COM+</div>
<div class="a" style="left:861px;top:220px;width:77px;height:19px;border:1px solid #d9d9d9;background:#f0f0f0"></div>
<div class="d" style="left:861px;top:223px;width:76px;text-align:center">Attribut-Editor</div>
<div class="a" style="left:614px;top:238px;width:60px;height:19px;border:1px solid #d9d9d9;background:#f0f0f0"></div>
<div class="d" style="left:614px;top:241px;width:59px;text-align:center">Adresse</div>
<div class="a" style="left:673px;top:238px;width:53px;height:19px;border:1px solid #d9d9d9;background:#f0f0f0"></div>
<div class="d" style="left:673px;top:241px;width:52px;text-align:center">Konto</div>
<div class="a" style="left:725px;top:238px;width:53px;height:19px;border:1px solid #d9d9d9;background:#f0f0f0"></div>
<div class="d" style="left:725px;top:241px;width:52px;text-align:center">Profil</div>
<div class="a" style="left:777px;top:238px;width:83px;height:19px;border:1px solid #d9d9d9;background:#f0f0f0"></div>
<div class="d" style="left:777px;top:241px;width:82px;text-align:center">Rufnummern</div>
<div class="a" style="left:859px;top:238px;width:79px;height:19px;border:1px solid #d9d9d9;background:#f0f0f0"></div>
<div class="d" style="left:859px;top:241px;width:78px;text-align:center">Organisation</div>
<div class="a" style="left:545px;top:256px;width:395px;height:406px;border:1px solid #d9d9d9;background:#fff"></div>
<div class="a" style="left:545px;top:236px;width:70px;height:21px;border:1px solid #d9d9d9;border-bottom:none;background:#fff"></div>
<div class="d" style="left:545px;top:238px;width:69px;text-align:center">Allgemein</div>
<svg style="left:563px;top:269px" width="25" height="33"><defs><linearGradient id="ub" x1="0" y1="0" x2="1" y2="1"><stop offset="0" stop-color="#b9d6ee"/><stop offset="1" stop-color="#6d9fcf"/></linearGradient><linearGradient id="uh" x1="0" y1="0" x2="1" y2="1"><stop offset="0" stop-color="#d6b07c"/><stop offset="1" stop-color="#8a6438"/></linearGradient></defs><path d="M2 28c-1-6 2-11 7-12h6c5 1 8 5 8 10c0 3-3 5-10 5c-6 0-10-1-11-3z" fill="url(#ub)"/><path d="M9 17l2 12l1-12z" fill="#f4f8fb"/><ellipse cx="10" cy="10" rx="6.5" ry="8.5" fill="url(#uh)"/><path d="M4 6c1-4 4-5.5 7-5.5c3 0 5.5 2 5.5 6v5c-1-3-2-6-5-6c-3 0-4.5 1-7.5 0.5z" fill="#4a4a4a"/></svg>
<div class="d" style="left:618px;top:278px">Test1</div>
<div class="a" style="left:560px;top:312px;width:356px;height:1px;background:#a0a0a0"></div>
<div class="a" style="left:560px;top:481px;width:356px;height:1px;background:#a0a0a0"></div>
<div class="d" style="left:560px;top:331px">Vorname:</div>
<div class="d" style="left:560px;top:360px">Nachname:</div>
<div class="d" style="left:560px;top:390px">Anzeigename:</div>
<div class="d" style="left:560px;top:419px">Beschreibung:</div>
<div class="d" style="left:560px;top:448px">Büro:</div>
<div class="d" style="left:560px;top:500px">Rufnummer:</div>
<div class="d" style="left:560px;top:529px">E-Mail:</div>
<div class="d" style="left:560px;top:559px">Webseite:</div>
<div class="a" style="left:665px;top:328px;width:113px;height:21px;background:#fff;border:1px solid #0078d7"></div>
<div class="a" style="left:668px;top:331px;width:39px;height:13px;background:#0078d7"></div>
<div class="d" style="left:668px;top:331px;color:#fff;letter-spacing:-0.2px">Manfred</div>
<div class="d" style="left:789px;top:331px">Initialen:</div>
<div class="a" style="left:840px;top:328px;width:77px;height:21px;background:#fff;border:1px solid #7a7a7a"></div>
<div class="a" style="left:665px;top:357px;width:252px;height:21px;background:#fff;border:1px solid #7a7a7a"></div>
<div class="d" style="left:668px;top:360px">Walter</div>
<div class="a" style="left:665px;top:386px;width:252px;height:21px;background:#fff;border:1px solid #7a7a7a"></div>
<div class="d" style="left:668px;top:390px">Test1</div>
<div class="a" style="left:665px;top:416px;width:252px;height:21px;background:#fff;border:1px solid #7a7a7a"></div>
<div class="a" style="left:665px;top:445px;width:252px;height:21px;background:#fff;border:1px solid #7a7a7a"></div>
<div class="a" style="left:665px;top:497px;width:168px;height:21px;background:#fff;border:1px solid #7a7a7a"></div>
<div class="a" style="left:665px;top:526px;width:252px;height:21px;background:#fff;border:1px solid #7a7a7a"></div>
<div class="d" style="left:668px;top:529px">Manfred.Walter@ndsedv.de</div>
<div class="a" style="left:665px;top:555px;width:168px;height:21px;background:#fff;border:1px solid #7a7a7a"></div>
<div class="a" style="left:843px;top:498px;width:73px;height:19px;background:#e1e1e1;border:1px solid #adadad"></div>
<div class="d" style="left:843px;top:500px;width:73px;text-align:center">Andere...</div>
<div class="a" style="left:843px;top:556px;width:73px;height:19px;background:#e1e1e1;border:1px solid #adadad"></div>
<div class="d" style="left:843px;top:559px;width:73px;text-align:center">Andere...</div>
<div class="a" style="left:625px;top:670px;width:73px;height:21px;background:#e1e1e1;border:2px solid #0078d7"></div>
<div class="d" style="left:625px;top:674px;width:73px;text-align:center">OK</div>
<div class="a" style="left:706px;top:670px;width:73px;height:21px;background:#e1e1e1;border:1px solid #adadad"></div>
<div class="d" style="left:706px;top:674px;width:73px;text-align:center">Abbrechen</div>
<div class="a" style="left:787px;top:670px;width:73px;height:21px;background:#cccccc;border:1px solid #bfbfbf"></div>
<div class="d" style="left:787px;top:674px;width:73px;text-align:center;color:#838383">Übernehmen</div>
<div class="a" style="left:868px;top:670px;width:73px;height:21px;background:#cccccc;border:1px solid #bfbfbf"></div>
<div class="d" style="left:868px;top:674px;width:73px;text-align:center;color:#838383">Hilfe</div>
<svg style="left:1058px;top:820px" width="12" height="13"><rect x="9" y="2" width="1" height="1" fill="#a9b4c4"/><rect x="6" y="5" width="1" height="1" fill="#a9b4c4"/><rect x="9" y="5" width="1" height="1" fill="#a9b4c4"/><rect x="3" y="8" width="1" height="1" fill="#a9b4c4"/><rect x="6" y="8" width="1" height="1" fill="#a9b4c4"/><rect x="9" y="8" width="1" height="1" fill="#a9b4c4"/><rect x="0" y="11" width="1" height="1" fill="#a9b4c4"/><rect x="3" y="11" width="1" height="1" fill="#a9b4c4"/><rect x="6" y="11" width="1" height="1" fill="#a9b4c4"/><rect x="9" y="11" width="1" height="1" fill="#a9b4c4"/></svg>
</body></html>
